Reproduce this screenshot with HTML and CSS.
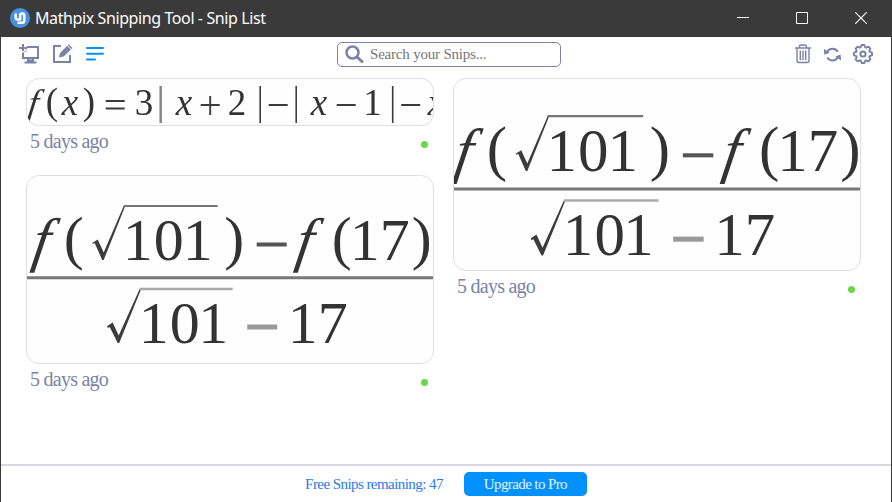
FILE: index.html
```
<!DOCTYPE html>
<html lang="en">
<head>
<meta charset="utf-8">
<title>Mathpix Snipping Tool - Snip List</title>
<link rel="stylesheet" href="styles.css">
</head>
<body>
<div class="window">
  <header class="titlebar">
    <svg class="logo" width="20" height="20" viewBox="0 0 20 20"><circle cx="10" cy="10" r="10" fill="#4a90e2"/><path d="M5.700 5.500v4q0 2 2 2h2.500V7q0-1.500 2-1.500t2 1.500v5.500q0 2.300-2.300 2.300H7.500" fill="none" stroke="#fff" stroke-width="2.500" stroke-linejoin="round"/></svg>
    <span class="title">Mathpix Snipping Tool - Snip List</span>
    <div class="controls">
      <svg width="12" height="12"><path d="M0 5.500h12" stroke="#fff"/></svg>
      <svg width="12" height="12"><path d="M.5.5h11v11H.5z" fill="none" stroke="#fff"/></svg>
      <svg width="12" height="12"><path d="M.3.300l11.400 11.400M11.700.3.300 11.700" stroke="#fff" stroke-width="1.200"/></svg>
    </div>
  </header>
  <nav class="toolbar">
    <div class="tools">
      <svg width="21" height="21" viewBox="0 -.5 21 21" fill="none" stroke="#7c82a6" stroke-width="2"><path d="M8 3.500h11v11H4V9"/><path d="M0 4.500h8M4 .5v7"/><path d="M5 9l3-3" stroke-width="1"/><path d="M9 15h5v2.500H9zM5.500 19h12"/></svg>
      <svg width="20" height="21" viewBox="0 0 20 21" fill="none" stroke="#7c82a6" stroke-width="2"><path d="M8 3H1v16h16v-7"/><path d="M6 14.500l1-4.500 7.200-7.200 3.700 3.700L10.700 13.500z" fill="#7c82a6" stroke="none"/><path d="M14.800 2.200l1-1 3.700 3.700-1 1z" fill="#7c82a6" stroke="none"/></svg>
      <svg width="18" height="21" viewBox="0 0 18 21" stroke="#0091ff" stroke-width="2" stroke-linecap="round"><path d="M1 5h16M1 10.700h16M1 16.400h8"/></svg>
    </div>
    <div class="search">
      <svg width="19" height="19" viewBox="0 0 19 19" fill="none" stroke="#7c82a6"><circle cx="7.500" cy="7.500" r="6" stroke-width="2.500"/><path d="M12 12l6 5.500" stroke-width="3"/></svg>
      <span>Search your Snips...</span>
    </div>
    <div class="actions">
      <svg width="16" height="20" viewBox="0 0 16 20" fill="none" stroke="#7c82a6" stroke-width="1.400"><path d="M0 4h16M4.500 4V2.200Q4.500 1 6 1h4q1.500 0 1.500 1.200V4M2 4v12.500q0 2 2 2h8q2 0 2-2V4M5.300 6.500v9.500M8 6.500v9.500M10.700 6.500v9.500"/></svg>
      <svg width="18" height="20" viewBox="-.5 -.5 18 20" fill="none" stroke="#7c82a6" stroke-width="2"><path d="M3 8.500Q5 4.200 9 4.200q3.500 0 5.300 3M15 11.500Q13 16 9 16q-3.500 0-5.300-3"/><path d="M.3 4.200l.5 6 5.500-2zM17.700 16l-.7-6-5.300 2.200z" fill="#7c82a6" stroke="none"/></svg>
      <svg width="20" height="20" viewBox="-10 -10 20 20" fill="none" stroke="#7c82a6"><path d="M1.400-9L2.200-6.700 3.200-6.300 5.400-7.400 7.400-5.400 6.300-3.200 6.700-2.200 9-1.400V1.400L6.700 2.200 6.300 3.200 7.400 5.400 5.400 7.400 3.200 6.300 2.200 6.700 1.400 9H-1.400L-2.200 6.700-3.200 6.300-5.400 7.400-7.400 5.400-6.300 3.200-6.700 2.200-9 1.400V-1.400L-6.700-2.200-6.300-3.200-7.400-5.400-5.400-7.400-3.200-6.300-2.200-6.700-1.400-9z" stroke-width="1.900" stroke-linejoin="round"/><circle r="2.600" stroke-width="2"/></svg>
    </div>
  </nav>
  <main class="snips">
    <div class="column">
      <article class="snip snip-line">
        <svg class="card formula" viewBox="27.300 79 406 46" preserveAspectRatio="none" font-size="37">
          <g class="ink">
            <text transform="translate(27 114.500) skewX(-8)" class="it">f</text><text x="46" y="114">(</text><text x="62" y="114.500" class="it">x</text><text x="83" y="114">)</text>
            <path d="M106 101h19M106 108.500h19" stroke-width="2"/>
            <text x="135" y="114.500">3</text>
            <path d="M161 86v37" stroke="#888" stroke-width="2.500"/>
            <text x="176" y="114.500" class="it">x</text>
            <path d="M201 105h19M210.500 96v19M269 105h19M337 105h19M401.500 105h19" stroke-width="1.900"/>
            <text x="228" y="114.500">2</text>
            <path d="M260.500 86v37M296.500 86v37M393 86v37" stroke-width="1.600"/>
            <text x="311" y="114.500" class="it">x</text><text x="363.500" y="114.500">1</text><text x="428" y="114.500" class="it">x</text>
          </g>
        </svg>
        <div class="meta"><span>5 days ago</span><i class="dot"></i></div>
      </article>
      <article class="snip snip-left">
        <svg class="card formula" viewBox="27.300 176 406 187" preserveAspectRatio="none" font-size="60">
          <g class="ink" id="quotient">
            <text transform="translate(31 259.500) skewX(-9)" class="it">f</text><text x="64" y="258">(</text>
            <path class="tick" d="M92.500 243l5.500-3.500 6 13 20-46.500h1.500L104 260h-1.500l-7.500-17-2 1z"/><path d="M124 206h94" stroke="#777" stroke-width="2.200"/>
            <text x="123 154 183" y="260">101</text><text x="224.500" y="258">)</text>
            <path d="M257 244.500h30" stroke="#555" stroke-width="4"/>
            <text transform="translate(294.500 259.500) skewX(-9)" class="it">f</text><text x="332" y="258">(</text><text x="350 380" y="260">17</text><text x="412" y="258">)</text>
            <path d="M20 277.700h420" stroke="#777" stroke-width="3"/>
            <path class="tick" d="M107.500 326l5.500-3.500 6 13 21-46.500h1.500L119.500 343H118l-8-16-2 1z"/><path d="M140 289h93" stroke="#aaa" stroke-width="2.500"/>
            <text x="139 170 198.500" y="342.500">101</text>
            <path d="M247.500 327h30" stroke="#999" stroke-width="5"/>
            <text x="288 318" y="342.500">17</text>
          </g>
        </svg>
        <div class="meta"><span>5 days ago</span><i class="dot"></i></div>
      </article>
    </div>
    <div class="column">
      <article class="snip snip-right">
        <svg class="card formula" viewBox="454.300 79 406 191" preserveAspectRatio="none" font-size="60">
          <use href="#quotient" transform="translate(421.900 -93.200) scale(1.0164)"/>
        </svg>
        <div class="meta"><span>5 days ago</span><i class="dot"></i></div>
      </article>
    </div>
  </main>
  <footer class="footer">
    <span class="remaining">Free Snips remaining: 47</span>
    <button class="upgrade">Upgrade to Pro</button>
  </footer>
</div>
</body>
</html>
```
FILE: styles.css
```
* { box-sizing: border-box; }
body { margin: 0; font-family: "Liberation Serif", serif; }
svg { display: block; flex: none; }
.window { width: 892px; height: 502px; display: flex; flex-direction: column; background: #fff; border: solid #3a3a3a; border-width: 0 1px; overflow: hidden; }
.titlebar { height: 37px; flex: none; display: flex; align-items: center; background: #3a3a3a; padding: 0 24px 1px 9px; color: #fff; }
.title { font: 16px "Noto Sans", sans-serif; letter-spacing: -0.4px; margin-left: 5px; white-space: nowrap; }
.controls { display: flex; gap: 47px; margin-left: auto; }
.toolbar { height: 41px; flex: none; display: flex; align-items: flex-start; padding: 6px 18px 0 18px; }
.tools { display: flex; gap: 13px; width: 318px; }
.search { width: 224px; height: 25px; margin-top: -1px; border: 1px solid #7c82a6; border-radius: 5px; display: flex; align-items: center; padding-left: 7px; gap: 6px; color: #757575; font-size: 15px; letter-spacing: -0.2px; white-space: nowrap; }
.actions { display: flex; gap: 12px; margin: 1px 0 0 auto; }
.snips { flex: 1; min-height: 0; display: flex; gap: 19px; padding-left: 25px; }
.column { width: 408px; }
.snip { display: flex; flex-direction: column; }
.card { width: 408px; border: 1px solid #dfdfdf; border-radius: 13px; background: #fefefe; overflow: hidden; }
.snip-line { height: 97px; }
.snip-line .card { height: 48px; }
.snip-left .card { height: 189px; }
.snip-right .card { height: 193px; }
.formula { font-family: "Liberation Serif", serif; }
.ink { fill: #333; stroke: #3c3c3c; stroke-width: 1; filter: blur(0.55px); }
.ink text { stroke: none; }
.ink path { fill: none; }
.ink .tick { fill: #3c3c3c; stroke: none; }
.it { font-style: italic; }
.meta { display: flex; align-items: center; justify-content: space-between; height: 30px; padding: 0 6px 0 4px; color: #7c82a6; font-size: 20px; letter-spacing: -0.75px; }
.dot { width: 7px; height: 7px; border-radius: 50%; background: #66d944; margin-top: 6px; }
.footer { height: 38px; flex: none; border-top: 2px solid #d7d8e2; display: flex; align-items: center; justify-content: center; gap: 21px; font-size: 15px; }
.remaining { color: #2878f0; letter-spacing: -0.56px; white-space: nowrap; }
.upgrade { width: 123px; height: 24px; padding: 0; border: 0; border-radius: 5px; background: #0091ff; color: #e5f4ff; font: 15px "Liberation Serif", serif; letter-spacing: -0.6px; }
```
